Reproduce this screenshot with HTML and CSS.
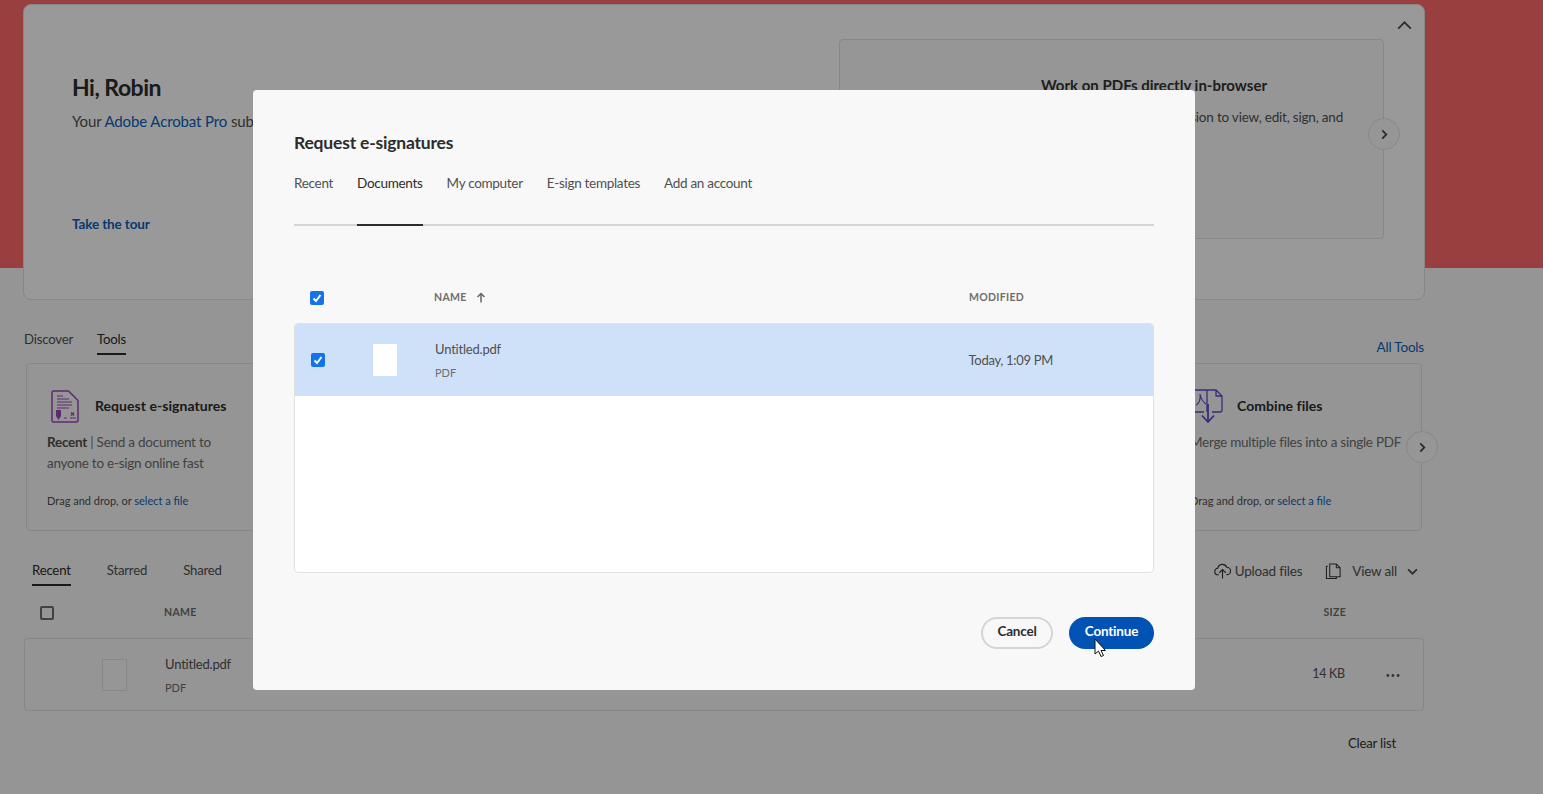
FILE: index.html
```html
<!DOCTYPE html>
<html lang="en">
<head>
<meta charset="utf-8">
<title>Request e-signatures</title>
<link rel="stylesheet" href="styles.css">
</head>
<body>
<div class="page">
  <section class="hero-band">
    <div class="hero-card">
      <div class="hero-left">
        <h1 class="hero-title">Hi, Robin</h1>
        <p class="hero-sub">Your <a class="link">Adobe Acrobat Pro</a> subscription</p>
        <a class="link tour">Take the tour</a>
      </div>
      <div class="hero-promo">
        <h2 class="promo-title">Work on PDFs directly in-browser</h2>
        <p class="promo-text">Use the Acrobat extension to view, edit, sign, and</p>
      </div>
      <button class="round-btn promo-next"><svg viewBox="0 0 10 12" width="9" height="11"><path d="M2.500 1.500 7 6l-4.500 4.500" class="chev"/></svg></button>
      <svg class="collapse" viewBox="0 0 16 10" width="15" height="9"><path d="M1 8.500 8 1.500l7 7" class="chev"/></svg>
    </div>
  </section>

  <section class="tools">
    <div class="tools-head">
      <nav class="tabs">
        <span class="tab">Discover</span>
        <span class="tab tab-on">Tools</span>
      </nav>
      <a class="link all-tools">All Tools</a>
    </div>
    <div class="tool-row">
      <article class="tool-card">
        <div class="tool-head">
          <svg class="tool-icon" viewBox="0 0 28 33" width="28" height="33">
            <path d="M2.500 1h15l9.500 9.500V30a2 2 0 0 1-2 2H2.500a1.500 1.500 0 0 1-1.500-1.500v-28A1.500 1.500 0 0 1 2.500 1Z" fill="none" stroke="#9a45bd" stroke-width="1.500"/>
            <path d="M6 6h6M6 9h12M6 12h15M6 15h15M6 18h12M13 28h3M19 28h6M20 22.500l3 3M23 22.500l-3 3" stroke="#9a45bd" stroke-width="1.200" fill="none"/>
            <path d="M5 20h5v6l-2.500 4L5 26Z" fill="#9a45bd"/>
          </svg>
          <h3 class="tool-title">Request e-signatures</h3>
        </div>
        <p class="tool-text"><b>Recent</b> | Send a document to<br>anyone to e-sign online fast</p>
        <p class="tool-drop">Drag and drop, or <a class="link">select a file</a></p>
      </article>
      <article class="tool-card">
        <div class="tool-head combine-head">
          <svg class="tool-icon" viewBox="0 0 32 36" width="32" height="36">
            <path d="M15 2H3a2 2 0 0 0-2 2v18a2 2 0 0 0 2 2h9M15 2h9l6 6v14a2 2 0 0 1-2 2h-8M15 2v22M24 2v6h6" fill="none" stroke="#5a4ccf" stroke-width="1.300"/>
            <path d="M4 17c3-1 5-6 4-11 1 5 3 8 6 10" fill="none" stroke="#5a4ccf" stroke-width="1.100"/>
            <path d="M16 16v18M10 27.500l6 6.500 6-6.500" fill="none" stroke="#5a4ccf" stroke-width="1.800"/>
          </svg>
          <h3 class="tool-title">Combine files</h3>
        </div>
        <p class="tool-text">Merge multiple files into a single PDF</p>
        <p class="tool-drop">Drag and drop, or <a class="link">select a file</a></p>
      </article>
      <button class="round-btn tool-next"><svg viewBox="0 0 10 12" width="9" height="11"><path d="M2.500 1.500 7 6l-4.500 4.500" class="chev"/></svg></button>
    </div>
  </section>

  <section class="files">
    <div class="files-head">
      <nav class="tabs file-tabs">
        <span class="tab tab-on">Recent</span>
        <span class="tab">Starred</span>
        <span class="tab">Shared</span>
      </nav>
      <div class="file-actions">
        <span class="action"><svg viewBox="0 0 18 18" width="17" height="18"><path d="M5 13H4.500a3.500 3.500 0 0 1-.5-7A5 5 0 0 1 13.500 5 4 4 0 0 1 13.500 13H13M9 17V8M5.500 11 9 7.500l3.500 3.500" fill="none" stroke="#333" stroke-width="1.200"/></svg>Upload files</span>
        <span class="action view-all"><svg viewBox="0 0 18 18" width="17" height="18"><path d="M3 4H1.500v13H12v-1.500M5 1.500h7l4 4V15H5ZM12 1.500v4h4" fill="none" stroke="#333" stroke-width="1.100"/></svg><span>View all</span><svg viewBox="0 0 12 8" width="11" height="7"><path d="M1 1.500l5 5 5-5" class="chev"/></svg></span>
      </div>
    </div>
    <div class="list-head">
      <span class="box"></span>
      <span class="col-label list-name">NAME</span>
      <span class="col-label list-size">SIZE</span>
    </div>
    <div class="list-row">
      <span class="list-thumb"></span>
      <div class="file-meta">
        <span class="file-name">Untitled.pdf</span>
        <span class="file-type">PDF</span>
      </div>
      <span class="file-size">14 KB</span>
      <span class="more">•••</span>
    </div>
    <div class="clear-row"><span class="clear">Clear list</span></div>
  </section>
</div>

<div class="overlay"></div>

<div class="modal" role="dialog">
  <h2 class="modal-title">Request e-signatures</h2>
  <nav class="modal-tabs">
    <span class="m-tab">Recent</span>
    <span class="m-tab m-tab-on">Documents</span>
    <span class="m-tab">My computer</span>
    <span class="m-tab">E-sign templates</span>
    <span class="m-tab">Add an account</span>
  </nav>
  <div class="m-head">
    <span class="check check-head"><svg viewBox="0 0 14 14" width="14" height="14"><path d="M3.500 7.500 6 10l4.500-6" class="tick"/></svg></span>
    <span class="col-label m-name">NAME<svg class="sort" viewBox="0 0 10 11" width="10" height="11"><path d="M5 10.500V1.500M1.500 5 5 1.500 8.500 5" fill="none" stroke="#666" stroke-width="1.500"/></svg></span>
    <span class="col-label m-mod">MODIFIED</span>
  </div>
  <div class="m-table">
    <div class="m-row">
      <span class="check"><svg viewBox="0 0 14 14" width="14" height="14"><path d="M3.500 7.500 6 10l4.500-6" class="tick"/></svg></span>
      <span class="m-thumb"></span>
      <div class="file-meta m-meta">
        <span class="file-name">Untitled.pdf</span>
        <span class="file-type">PDF</span>
      </div>
      <span class="m-date">Today, 1:09 PM</span>
    </div>
  </div>
  <div class="m-actions">
    <button class="btn btn-cancel">Cancel</button>
    <button class="btn btn-continue">Continue</button>
  </div>
</div>

<svg class="cursor" viewBox="0 0 13 20" width="13" height="20"><path d="M1 1v15l3.500-3 2.500 5.500 2.500-1L7 12.500h4.500Z" fill="#fff" stroke="#111" stroke-width="1"/></svg>
</body>
</html>
```

FILE: styles.css
```css
* { box-sizing: border-box; }

html, body {
  margin: 0;
  height: 794px;
  overflow: hidden;
}

body {
  font-family: "Lato", "Open Sans", sans-serif;
  letter-spacing: -0.2px;
  color: #2c2c2c;
  background: #f8f8f8;
}

h1, h2, h3, p { margin: 0; }

a.link { color: #0d5fb8; }

.page {
  height: 794px;
  display: flex;
  flex-direction: column;
}

/* Hero */
.hero-band {
  height: 268px;
  flex: none;
  padding: 4px 0 0 23px;
  background: #ff6a6a;
}

.hero-card {
  position: relative;
  width: 1402px;
  height: 296px;
  display: flex;
  justify-content: space-between;
  padding: 34px 40px 0 48px;
  background: #fff;
  border: 1px solid #e1e1e1;
  border-radius: 8px;
}

.hero-left {
  display: flex;
  flex-direction: column;
  align-items: flex-start;
  padding-top: 33px;
}

.hero-title {
  font-size: 23px;
  font-weight: 700;
  line-height: 30px;
  letter-spacing: -0.5px;
  color: #2c2c2c;
}

.hero-sub {
  margin-top: 9px;
  font-size: 15px;
  line-height: 20px;
  letter-spacing: -0.12px;
  white-space: nowrap;
  color: #505050;
}

.tour {
  margin-top: 83px;
  font-size: 13.5px;
  line-height: 20px;
  font-weight: 700;
  letter-spacing: -0.12px;
}

.hero-promo {
  width: 545px;
  height: 200px;
  padding: 35px 40px 0 0;
  background: #fbfbfb;
  border: 1px solid #e1e1e1;
  border-radius: 4px;
  text-align: right;
}

.promo-title {
  padding-right: 76px;
  font-size: 15px;
  line-height: 20px;
  font-weight: 700;
  letter-spacing: 0;
  color: #333;
}

.promo-text {
  margin-top: 12px;
  font-size: 13.5px;
  line-height: 20px;
  white-space: nowrap;
  color: #505050;
}

.round-btn {
  position: absolute;
  display: flex;
  align-items: center;
  justify-content: center;
  width: 32px;
  height: 32px;
  padding: 0;
  background: #fbfbfb;
  border: 1px solid #e1e1e1;
  border-radius: 50%;
}

.promo-next { right: 24px; top: 113px; }

.chev {
  fill: none;
  stroke: #4b4b4b;
  stroke-width: 2;
}

.collapse {
  position: absolute;
  right: 12px;
  top: 16px;
}

/* Tools */
.tools {
  padding: 0 118px 0 24px;
  margin-top: 60px;
}

.tools-head {
  display: flex;
  justify-content: space-between;
  height: 35px;
}

.tabs {
  display: flex;
  gap: 24px;
}

.tab {
  height: 27px;
  font-size: 13.2px;
  line-height: 22px;
  color: #505050;
}

.tab-on {
  color: #2c2c2c;
  border-bottom: 2px solid #2c2c2c;
}

.all-tools {
  margin-top: 9px;
  margin-right: 1px;
  font-size: 13.5px;
  line-height: 20px;
}

.tool-row {
  position: relative;
  display: flex;
  justify-content: space-between;
  margin: 0 3px 0 2px;
}

.tool-card {
  width: 253px;
  height: 168px;
  padding: 24px 16px 0 20px;
  border: 1px solid #e1e1e1;
  border-radius: 4px;
}

.tool-head {
  display: flex;
  align-items: center;
  gap: 16px;
  height: 36px;
  padding-left: 4px;
}

.combine-head {
  gap: 13px;
  padding-left: 2px;
}

.tool-title {
  font-size: 14px;
  line-height: 20px;
  font-weight: 700;
  letter-spacing: 0.05px;
  color: #2c2c2c;
}

.tool-text {
  height: 42px;
  margin-top: 8px;
  font-size: 13.5px;
  line-height: 21px;
  letter-spacing: -0.25px;
  color: #6e6e6e;
}

.tool-text b { color: #505050; }

.tool-drop {
  margin-top: 18px;
  font-size: 11px;
  line-height: 18px;
  letter-spacing: 0;
  color: #505050;
}

.tool-next { right: -16px; top: 68px; }

/* Files */
.files {
  padding: 0 119px 0 24px;
  margin-top: 28px;
}

.files-head {
  display: flex;
  justify-content: space-between;
  height: 29px;
}

.file-tabs {
  gap: 36px;
  padding-left: 8px;
}

.file-actions {
  display: flex;
  gap: 23px;
  padding-right: 6px;
}

.action {
  display: flex;
  gap: 4px;
  height: 24px;
  align-items: center;
  font-size: 13.5px;
  color: #505050;
}

.view-all { gap: 10px; }

.list-head {
  display: flex;
  align-items: center;
  height: 24px;
  margin-top: 12px;
}

.box {
  width: 14px;
  height: 14px;
  margin: 2px 0 0 16px;
  border: 2px solid #6e6e6e;
  border-radius: 2px;
}

.col-label {
  font-size: 10.5px;
  font-weight: 700;
  letter-spacing: 0.3px;
  color: #6e6e6e;
}

.list-name { margin-left: 110px; }
.list-size { margin-left: auto; margin-right: 78px; }

.list-row {
  display: flex;
  align-items: center;
  height: 73px;
  margin-top: 14px;
  border: 1px solid #e1e1e1;
  border-radius: 4px;
}

.list-thumb {
  width: 25px;
  height: 32px;
  margin-left: 77px;
  background: #fbfbfb;
  border: 1px solid #e1e1e1;
}

.file-meta {
  display: flex;
  flex-direction: column;
  gap: 8px;
  margin-left: 38px;
}

.file-name {
  font-size: 13px;
  line-height: 18px;
  color: #505050;
}

.file-type {
  font-size: 11px;
  line-height: 14px;
  letter-spacing: 0;
  color: #6e6e6e;
}

.file-size {
  margin: 0 0 2px auto;
  font-size: 12.5px;
  letter-spacing: -0.3px;
  color: #505050;
}

.more {
  margin: 0 22px 0 41px;
  font-size: 7px;
  letter-spacing: 1px;
  color: #505050;
}

.clear-row {
  display: flex;
  justify-content: flex-end;
  margin-top: 22px;
  padding-right: 28px;
}

.clear {
  font-size: 13.2px;
  line-height: 20px;
  color: #333;
}

/* Dialog */
.overlay {
  position: fixed;
  inset: 0;
  background: rgba(0, 0, 0, 0.4);
}

.modal {
  position: absolute;
  left: 253px;
  top: 90px;
  width: 942px;
  height: 600px;
  padding: 41px 41px 0;
  background: #f8f8f8;
  border-radius: 4px;
}

.modal-title {
  font-size: 17.5px;
  line-height: 24px;
  font-weight: 700;
  color: #2c2c2c;
}

.modal-tabs {
  display: flex;
  gap: 24px;
  height: 57px;
  margin-top: 14px;
  padding-top: 4px;
  border-bottom: 2px solid #d5d5d5;
}

.m-tab {
  height: 53px;
  font-size: 13.5px;
  line-height: 21px;
  letter-spacing: -0.3px;
  color: #505050;
}

.m-tab-on {
  color: #2c2c2c;
  border-bottom: 2px solid #2c2c2c;
}

.m-head {
  display: flex;
  align-items: center;
  height: 28px;
  margin-top: 57px;
}

.check {
  display: block;
  flex: none;
  width: 14px;
  height: 14px;
  background: #1473e6;
  border-radius: 2px;
}

.check svg { display: block; }

.check-head { margin: 2px 0 0 16px; }

.tick {
  fill: none;
  stroke: #fff;
  stroke-width: 2;
}

.m-name {
  display: flex;
  align-items: center;
  gap: 9px;
  margin-left: 110px;
}

.m-mod { margin-left: auto; margin-right: 130px; }

.m-table {
  height: 250px;
  margin-top: 12px;
  background: #fff;
  border: 1px solid #e1e1e1;
  border-radius: 4px;
  overflow: hidden;
}

.m-row {
  display: flex;
  align-items: center;
  height: 72px;
  background: #cfe1f9;
}

.m-row .check { margin-left: 16px; }

.m-thumb {
  flex: none;
  width: 24px;
  height: 32px;
  margin-left: 48px;
  background: #fff;
}

.m-meta { margin-left: 38px; }

.m-date {
  margin-left: auto;
  margin-right: 100px;
  font-size: 13px;
  letter-spacing: -0.3px;
  color: #505050;
}

.m-actions {
  display: flex;
  justify-content: flex-end;
  gap: 16px;
  margin-top: 44px;
}

.btn {
  height: 32px;
  padding: 0 0 4px;
  border-radius: 16px;
  font-family: inherit;
  font-size: 13.5px;
  font-weight: 700;
  letter-spacing: -0.2px;
  line-height: 22px;
}

.btn-cancel {
  width: 72px;
  background: #f8f8f8;
  border: 2px solid #d5d5d5;
  color: #2c2c2c;
}

.btn-continue {
  width: 85px;
  background: #0053b4;
  border: 0;
  color: #fff;
}

.cursor {
  position: absolute;
  left: 1094px;
  top: 638px;
}
```
